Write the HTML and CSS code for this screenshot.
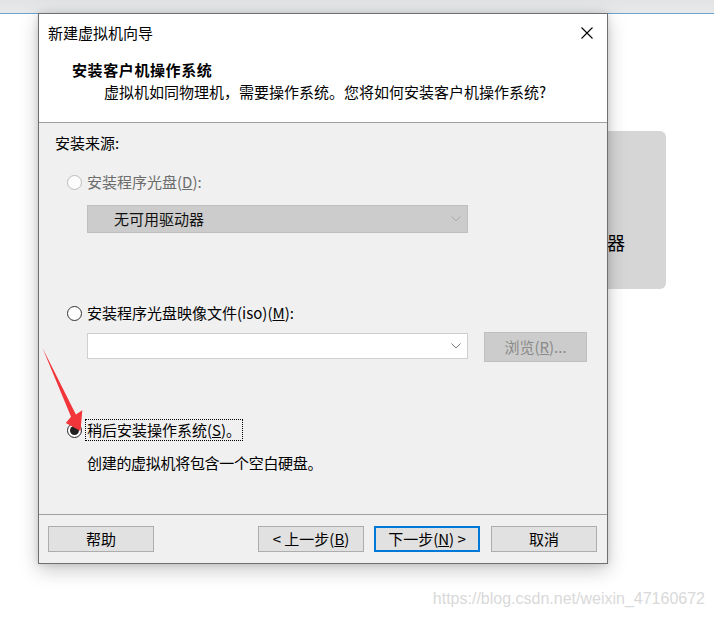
FILE: index.html
```html
<!DOCTYPE html>
<html lang="zh-CN">
<head>
<meta charset="utf-8">
<title>新建虚拟机向导</title>
<link rel="stylesheet" href="styles.css">
</head>
<body>
<div class="desk">
  <div class="topbar"></div>
  <div class="bgcard">器</div>

  <div class="dialog">
    <div class="titlebar">
      <span class="wtitle">新建虚拟机向导</span>
      <svg class="close" width="12" height="12" viewBox="0 0 12 12"><path d="M0.5 0.5 L11.5 11.5 M11.5 0.5 L0.5 11.5" stroke="#000" stroke-width="1.1" fill="none"/></svg>
    </div>
    <div class="header">
      <div class="h-title">安装客户机操作系统</div>
      <div class="h-sub">虚拟机如同物理机，需要操作系统。您将如何安装客户机操作系统?</div>
    </div>
    <div class="content">
      <div class="label">安装来源:</div>
      <div class="radio-row disabled r1"><span class="radio"></span><span>安装程序光盘(<u>D</u>):</span></div>
      <div class="combo combo-disabled">
        <span>无可用驱动器</span>
        <svg class="chev" width="10" height="6" viewBox="0 0 10 6"><path d="M0.5 0.5 L5 5 L9.5 0.5" stroke="#a8a8a8" fill="none"/></svg>
      </div>
      <div class="radio-row r2"><span class="radio"></span><span>安装程序光盘映像文件(iso)(<u>M</u>):</span></div>
      <div class="iso-row">
        <div class="combo combo-edit">
          <span class="edit"></span>
          <svg class="chev" width="10" height="6" viewBox="0 0 10 6"><path d="M0.5 0.5 L5 5 L9.5 0.5" stroke="#7a7a7a" fill="none"/></svg>
        </div>
        <div class="btn btn-disabled">浏览(<u>R</u>)...</div>
      </div>
      <div class="radio-row r3"><span class="radio checked"></span><span class="focus">稍后安装操作系统(<u>S</u>)。</span></div>
      <div class="desc">创建的虚拟机将包含一个空白硬盘。</div>
    </div>
    <div class="footer">
      <div class="btn">帮助</div>
      <div class="spacer"></div>
      <div class="btn">&lt; 上一步(<u>B</u>)</div>
      <div class="btn btn-default">下一步(<u>N</u>) &gt;</div>
      <div class="btn btn-cancel">取消</div>
    </div>
  </div>

  <svg class="arrow" width="714" height="617" viewBox="0 0 714 617">
    <polygon points="42.5,348 75.9,414.4 82.3,410.3 80.5,431 65.8,423 71,416.8" fill="#f2353a"/>
  </svg>

  <div class="watermark">https://blog.csdn.net/weixin_47160672</div>
</div>
</body>
</html>
```

FILE: styles.css
```css
html, body {
  margin: 0;
  padding: 0;
  background: #ffffff;
}

.desk {
  position: relative;
  width: 714px;
  height: 617px;
  overflow: hidden;
  background: #ffffff;
  font-family: "Noto Sans CJK SC", "Microsoft YaHei", sans-serif;
  font-size: 15px;
  color: #000;
}

.topbar {
  height: 13px;
  background: linear-gradient(#e2e3e5, #e8e9eb);
  border-bottom: 1px solid #6ea3d0;
}

.bgcard {
  position: absolute;
  left: 560px;
  top: 131px;
  width: 106px;
  height: 158px;
  box-sizing: border-box;
  border-radius: 6px;
  background: #d6d6d6;
  padding: 102px 0 0 47px;
  font-size: 18px;
  line-height: 18px;
}

.dialog {
  position: absolute;
  left: 38px;
  top: 13px;
  width: 570px;
  height: 551px;
  box-sizing: border-box;
  border: 1px solid #6f6f6f;
  background: #f0f0f0;
  box-shadow: 0 6px 18px rgba(0, 0, 0, 0.22), 0 0 6px rgba(0, 0, 0, 0.12);
  display: flex;
  flex-direction: column;
}

.titlebar {
  height: 38px;
  background: #fff;
  display: flex;
  align-items: center;
  justify-content: space-between;
  padding: 0 14px 0 9px;
}

.wtitle {
  line-height: 20px;
}

.close {
  display: block;
}

.header {
  height: 71px;
  box-sizing: border-box;
  background: #fff;
  border-bottom: 1px solid #a0a0a0;
  padding-top: 7px;
  line-height: 22px;
}

.h-title {
  padding-left: 33px;
  font-weight: bold;
  letter-spacing: 0.6px;
}

.h-sub {
  padding-left: 65px;
}

.content {
  height: 392px;
  box-sizing: border-box;
  border-bottom: 1px solid #a0a0a0;
  padding-top: 10px;
  line-height: 20px;
}

.label {
  padding-left: 16px;
}

.radio-row {
  display: flex;
  align-items: center;
  height: 20px;
  padding-left: 28px;
  gap: 5px;
}

.radio {
  width: 15px;
  height: 15px;
  box-sizing: border-box;
  border-radius: 50%;
  border: 1px solid #333;
  background: #fff;
  display: flex;
  align-items: center;
  justify-content: center;
  flex: none;
}

.disabled {
  color: #6d6d6d;
}

.disabled .radio {
  border-color: #bcbcbc;
  background: #fcfcfc;
}

.radio.checked {
  border-color: #222;
}

.radio.checked::after {
  content: "";
  width: 9px;
  height: 9px;
  border-radius: 50%;
  background: #222;
}

.r1 { margin-top: 19px; }
.r2 { margin-top: 70px; }
.r3 { margin-top: 58px; }

.focus {
  outline: 1px dotted #000;
  outline-offset: 0;
  padding: 0 1px;
  margin-left: -1px;
}

.combo {
  margin-left: 48px;
  width: 381px;
  box-sizing: border-box;
  display: flex;
  align-items: center;
}

.chev {
  display: block;
  margin-left: auto;
  margin-right: 6px;
}

.combo-disabled {
  margin-top: 13px;
  height: 28px;
  background: #cccccc;
  border: 1px solid #bfbfbf;
  padding-left: 26px;
  color: #111;
}

.iso-row {
  margin-top: 9px;
  height: 30px;
  display: flex;
  align-items: flex-start;
}

.combo-edit {
  margin-top: 1px;
  height: 26px;
  background: #fff;
  border: 1px solid #cfcfcf;
}

.edit {
  width: 355px;
}

.btn {
  width: 106px;
  height: 26px;
  box-sizing: border-box;
  background: #e1e1e1;
  border: 1px solid #adadad;
  display: flex;
  align-items: center;
  justify-content: center;
  line-height: 20px;
  flex: none;
}

.btn-disabled {
  margin-left: 16px;
  width: 103px;
  height: 30px;
  background: #cccccc;
  border-color: #bfbfbf;
  color: #8a8a8a;
}

.desc {
  margin-top: 13px;
  padding-left: 48px;
  letter-spacing: -0.3px;
}

.footer {
  flex: 1;
  display: flex;
  align-items: flex-start;
  padding: 11px 10px 0 9px;
}

.spacer {
  flex: 1;
}

.btn-default {
  margin-left: 10px;
  border: 2px solid #0078d7;
}

.btn-cancel {
  margin-left: 11px;
}

.arrow {
  position: absolute;
  left: 0;
  top: 0;
  pointer-events: none;
}

.watermark {
  position: absolute;
  right: 9px;
  top: 589px;
  font-family: "Liberation Sans", Arial, sans-serif;
  font-size: 16px;
  line-height: 20px;
  color: #d9d9d9;
}
```
